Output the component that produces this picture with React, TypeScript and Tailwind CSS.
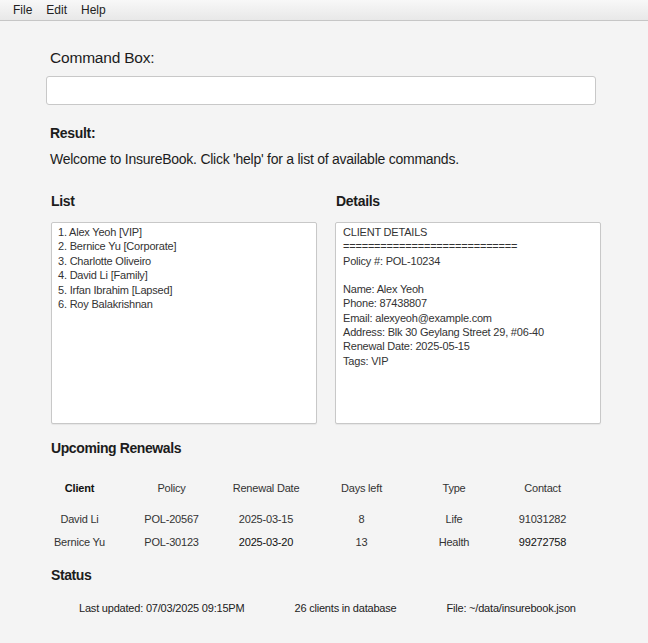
const clients = [
  '1. Alex Yeoh [VIP]',
  '2. Bernice Yu [Corporate]',
  '3. Charlotte Oliveiro',
  '4. David Li [Family]',
  '5. Irfan Ibrahim [Lapsed]',
  '6. Roy Balakrishnan',
];

const details = [
  'CLIENT DETAILS',
  '============================',
  'Policy #: POL-10234',
  '',
  'Name: Alex Yeoh',
  'Phone: 87438807',
  'Email: alexyeoh@example.com',
  'Address: Blk 30 Geylang Street 29, #06-40',
  'Renewal Date: 2025-05-15',
  'Tags: VIP',
];

const headers = ['Client', 'Policy', 'Renewal Date', 'Days left', 'Type', 'Contact'];

const renewals = [
  ['David Li', 'POL-20567', '2025-03-15', '8', 'Life', '91031282'],
  ['Bernice Yu', 'POL-30123', '2025-03-20', '13', 'Health', '99272758'],
];

export default function App() {
  return (
    <div className="w-[648px] h-[643px] overflow-hidden bg-[#f4f4f4] text-[#1c1c1c] font-['Liberation_Sans',Arial,sans-serif]">
      {/* Menu bar */}
      <div className="h-[21px] flex items-center gap-[14px] pl-[13px] text-[12px] text-[#222] border-b border-[#c6c6c6] bg-gradient-to-b from-[#f8f8f8] to-[#e8e8e8]">
        <span>File</span>
        <span>Edit</span>
        <span>Help</span>
      </div>

      <div className="pl-[46px] pr-[52px]">
        <div className="mt-[27px] pl-[4px] text-[15.5px] leading-[20px] tracking-[-0.2px]">Command Box:</div>
        <div className="mt-[8px] h-[29px] bg-white border border-[#c8c8c8] rounded-[3px]" />

        <div className="mt-[19px] pl-[4px] text-[14px] leading-[18px] font-bold tracking-[-0.3px]">Result:</div>
        <div className="mt-[8px] pl-[4px] text-[14px] leading-[18px] tracking-[-0.25px]">
          Welcome to InsureBook. Click 'help' for a list of available commands.
        </div>
      </div>

      {/* List and details panels */}
      <div className="mt-[24px] pl-[51px] flex gap-[18px]">
        <div className="w-[266px] shrink-0">
          <div className="text-[14px] leading-[18px] font-bold tracking-[-0.3px]">List</div>
          <div className="mt-[12px] h-[202px] bg-white border border-[#c8c8c8] rounded-[2px] shadow-[0_1px_1px_rgba(0,0,0,0.06)] pt-[2px] pl-[6px] text-[11px] leading-[14.4px] text-[#333] tracking-[-0.2px]">
            {clients.map((c) => (
              <div key={c}>{c}</div>
            ))}
          </div>
        </div>
        <div className="w-[266px] shrink-0">
          <div className="pl-[1px] text-[14px] leading-[18px] font-bold tracking-[-0.3px]">Details</div>
          <div className="mt-[12px] h-[202px] bg-white border border-[#c8c8c8] rounded-[2px] shadow-[0_1px_1px_rgba(0,0,0,0.06)] pt-[2px] pl-[7px] text-[11px] leading-[14.3px] text-[#333] tracking-[-0.2px]">
            {details.map((d, i) => (
              <div key={i} className="h-[14.3px] whitespace-pre">{d}</div>
            ))}
          </div>
        </div>
      </div>

      <div className="mt-[15px] pl-[51px] text-[14px] leading-[18px] font-bold tracking-[-0.4px]">Upcoming Renewals</div>

      {/* Renewals table */}
      <div className="pl-[34px] text-[11px] leading-[16px] text-[#333] tracking-[-0.2px]">
        <div className="mt-[23px] grid grid-cols-[91px_93px_96px_95px_90px_87px] text-center">
          {headers.map((h, i) => (
            <div key={h} className={i === 0 ? 'font-bold text-[#111]' : ''}>{h}</div>
          ))}
        </div>
        {renewals.map((row, r) => (
          <div
            key={row[0]}
            className={`grid grid-cols-[91px_93px_96px_95px_90px_87px] text-center ${r === 0 ? 'mt-[15px]' : 'mt-[7px]'}`}
          >
            {row.map((cell, i) => (
              <div key={i} className={r === 1 && (i === 2 || i === 5) ? 'text-[#111]' : ''}>{cell}</div>
            ))}
          </div>
        ))}
      </div>

      <div className="mt-[16px] pl-[51px] text-[14px] leading-[18px] font-bold tracking-[-0.4px]">Status</div>
      <div className="mt-[16px] pl-[79px] flex gap-[50px] text-[11px] leading-[16px] text-[#222] tracking-[-0.2px]">
        <span>Last updated: 07/03/2025 09:15PM</span>
        <span>26 clients in database</span>
        <span>File: ~/data/insurebook.json</span>
      </div>
    </div>
  );
}
